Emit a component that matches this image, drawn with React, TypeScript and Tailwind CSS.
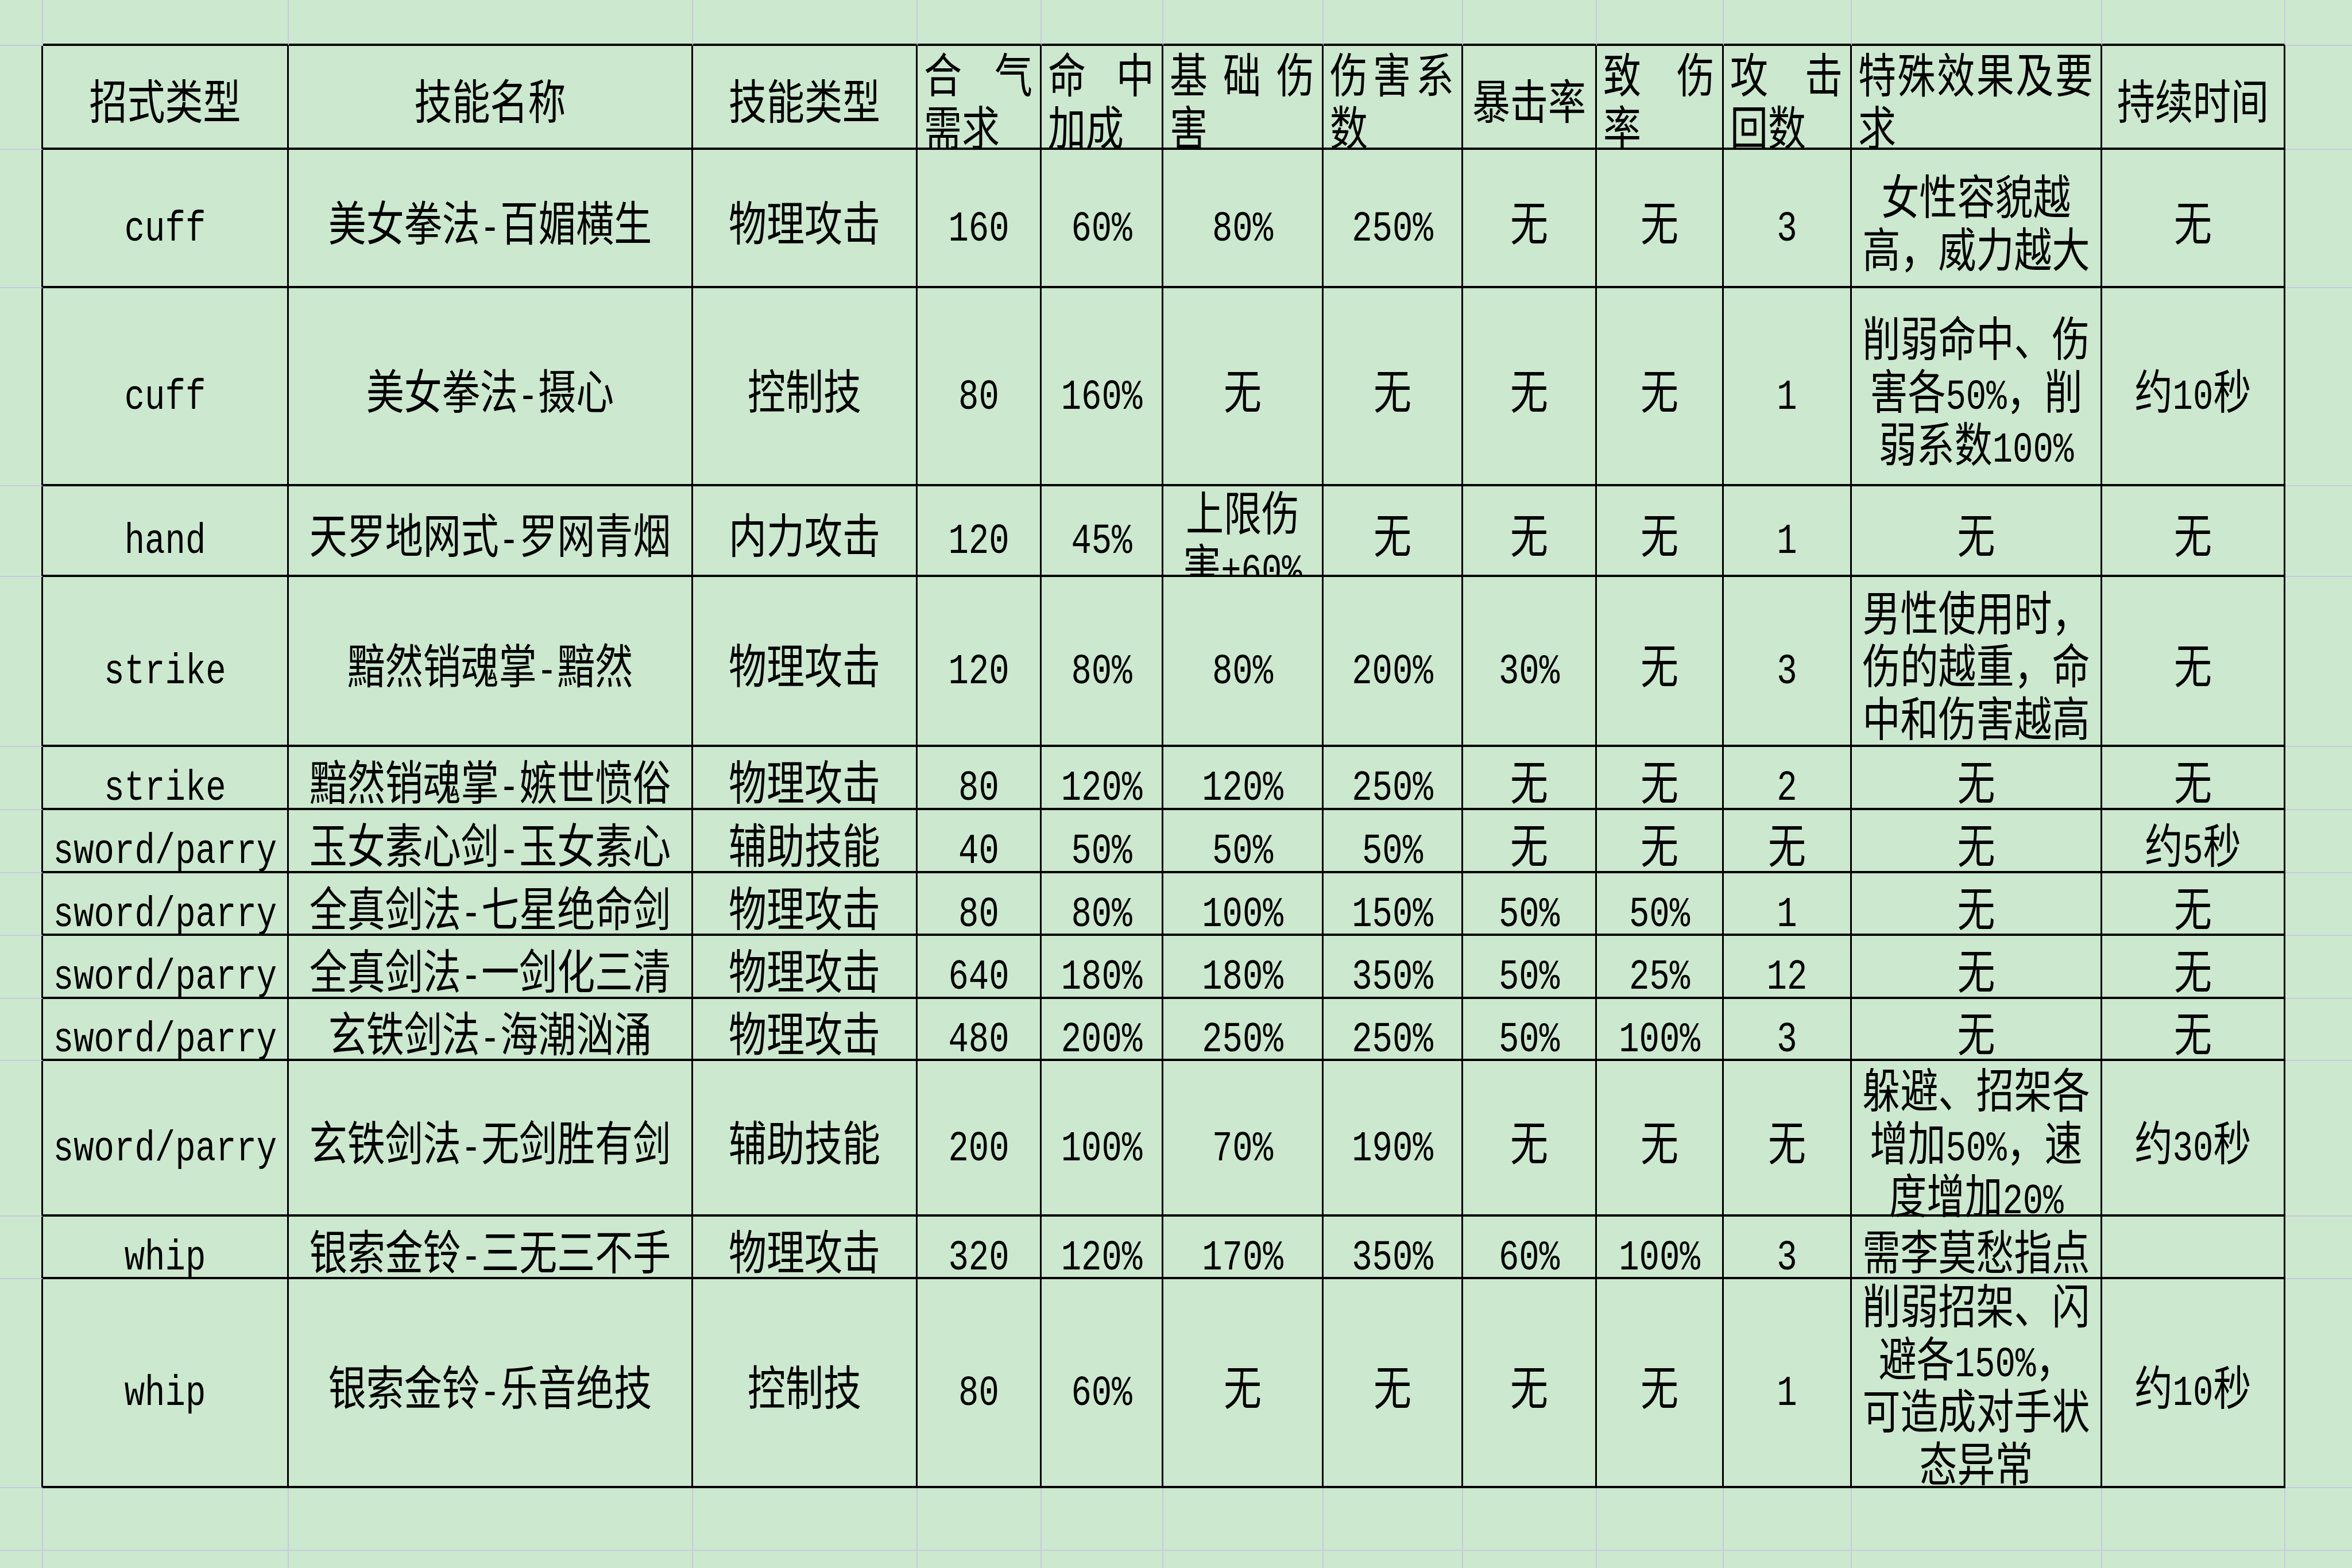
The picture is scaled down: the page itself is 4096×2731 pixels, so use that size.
import React from 'react';

// sheet: spacer column/row around a 12 x 13 table, like the spreadsheet view
const HEAD: (string | [string[], string])[] = [
  '招式类型',
  '技能名称',
  '技能类型',
  [['合', '气'], '需求'],
  [['命', '中'], '加成'],
  [['基', '础', '伤'], '害'],
  [['伤', '害', '系'], '数'],
  '暴击率',
  [['致', '伤'], '率'],
  [['攻', '击'], '回数'],
  [['特', '殊', '效', '果', '及', '要'], '求'],
  '持续时间',
];

// "|" splits lines, a leading "^" means the text overflows and sits at the top
const BODY: string[][] = [
  ['cuff', '美女拳法-百媚横生', '物理攻击', '160', '60%', '80%', '250%', '无', '无', '3', '女性容貌越|高，威力越大', '无'],
  ['cuff', '美女拳法-摄心', '控制技', '80', '160%', '无', '无', '无', '无', '1', '削弱命中、伤|害各50%，削|弱系数100%', '约10秒'],
  ['hand', '天罗地网式-罗网青烟', '内力攻击', '120', '45%', '^上限伤|害+60%', '无', '无', '无', '1', '无', '无'],
  ['strike', '黯然销魂掌-黯然', '物理攻击', '120', '80%', '80%', '200%', '30%', '无', '3', '男性使用时，|伤的越重，命|中和伤害越高', '无'],
  ['strike', '黯然销魂掌-嫉世愤俗', '物理攻击', '80', '120%', '120%', '250%', '无', '无', '2', '无', '无'],
  ['sword/parry', '玉女素心剑-玉女素心', '辅助技能', '40', '50%', '50%', '50%', '无', '无', '无', '无', '约5秒'],
  ['sword/parry', '全真剑法-七星绝命剑', '物理攻击', '80', '80%', '100%', '150%', '50%', '50%', '1', '无', '无'],
  ['sword/parry', '全真剑法-一剑化三清', '物理攻击', '640', '180%', '180%', '350%', '50%', '25%', '12', '无', '无'],
  ['sword/parry', '玄铁剑法-海潮汹涌', '物理攻击', '480', '200%', '250%', '250%', '50%', '100%', '3', '无', '无'],
  ['sword/parry', '玄铁剑法-无剑胜有剑', '辅助技能', '200', '100%', '70%', '190%', '无', '无', '无', '躲避、招架各|增加50%，速|度增加20%', '约30秒'],
  ['whip', '银索金铃-三无三不手', '物理攻击', '320', '120%', '170%', '350%', '60%', '100%', '3', '需李莫愁指点', ''],
  ['whip', '银索金铃-乐音绝技', '控制技', '80', '60%', '无', '无', '无', '无', '1', '^削弱招架、闪|避各150%，|可造成对手状|态异常', '约10秒'],
];

function Run({ text }: { text: string }) {
  const parts = text.split(/([\x20-\x7e]+)/).filter(Boolean);
  return (
    <>
      {parts.map((p, i) =>
        /^[\x20-\x7e]+$/.test(p) ? (
          <span key={i} className="font-['Liberation_Mono',monospace] text-[59px] leading-[0]">
            {p}
          </span>
        ) : (
          <span key={i}>{p}</span>
        ),
      )}
    </>
  );
}

function HeadCell({ v }: { v: string | [string[], string] }) {
  if (typeof v === 'string') {
    return (
      <div className="flex h-full items-center justify-center pt-[4px]">
        <div className="scale-y-[1.24] whitespace-nowrap">{v}</div>
      </div>
    );
  }
  const [first, rest] = v;
  return (
    <div className="flex h-full items-center pl-[11px] pr-[13px] pt-[4px]">
      <div className="w-full scale-y-[1.24]">
        <div className="flex justify-between">
          {first.map((ch, i) => (
            <span key={i}>{ch}</span>
          ))}
        </div>
        <div className="text-left">{rest}</div>
      </div>
    </div>
  );
}

function BodyCell({ v }: { v: string }) {
  const top = v.startsWith('^');
  const lines = (top ? v.slice(1) : v).split('|');
  return (
    <div
      className={
        top
          ? 'flex h-full justify-center overflow-hidden'
          : 'flex h-full items-center justify-center pt-[6px]'
      }
    >
      <div
        className={
          top ? 'origin-top -translate-y-[5px] scale-y-[1.24] text-center' : 'scale-y-[1.24] text-center'
        }
      >
        {lines.map((l, i) => (
          <div key={i} className="whitespace-nowrap">
            <Run text={l} />
          </div>
        ))}
      </div>
    </div>
  );
}

export default function App() {
  const cells: React.ReactNode[] = [];
  for (let r = 0; r < 16; r++) {
    for (let c = 0; c < 14; c++) {
      const inTable = r >= 1 && r <= 13 && c >= 1 && c <= 12;
      let right = '';
      if (c < 13) {
        right = r >= 1 && r <= 13 ? 'border-r-[3px] border-r-black' : 'border-r-2 border-r-[#c6cadf]';
      }
      let bottom = '';
      if (r < 15) {
        bottom = c >= 1 && c <= 12 && r <= 13 ? 'border-b-4 border-b-black' : 'border-b-2 border-b-[#c6cadf]';
      }
      cells.push(
        <div key={`${r}-${c}`} className={`min-h-0 min-w-0 ${right} ${bottom}`}>
          {inTable && r === 1 && <HeadCell v={HEAD[c - 1]} />}
          {inTable && r > 1 && <BodyCell v={BODY[r - 2][c - 1]} />}
        </div>,
      );
    }
  }

  return (
    <div className="grid h-[2731px] w-[4096px] grid-cols-[75px_428px_704px_391px_216px_212px_279px_243px_233px_221px_223px_436px_319px_1fr] grid-rows-[80px_181px_241px_345px_158px_296px_110px_110px_109px_110px_108px_271px_109px_364px_109px_1fr] overflow-hidden bg-[#cce8cf] font-['Noto_Sans_CJK_SC','Liberation_Sans',sans-serif] text-[66px] leading-[74px] text-black">
      {cells}
    </div>
  );
}
